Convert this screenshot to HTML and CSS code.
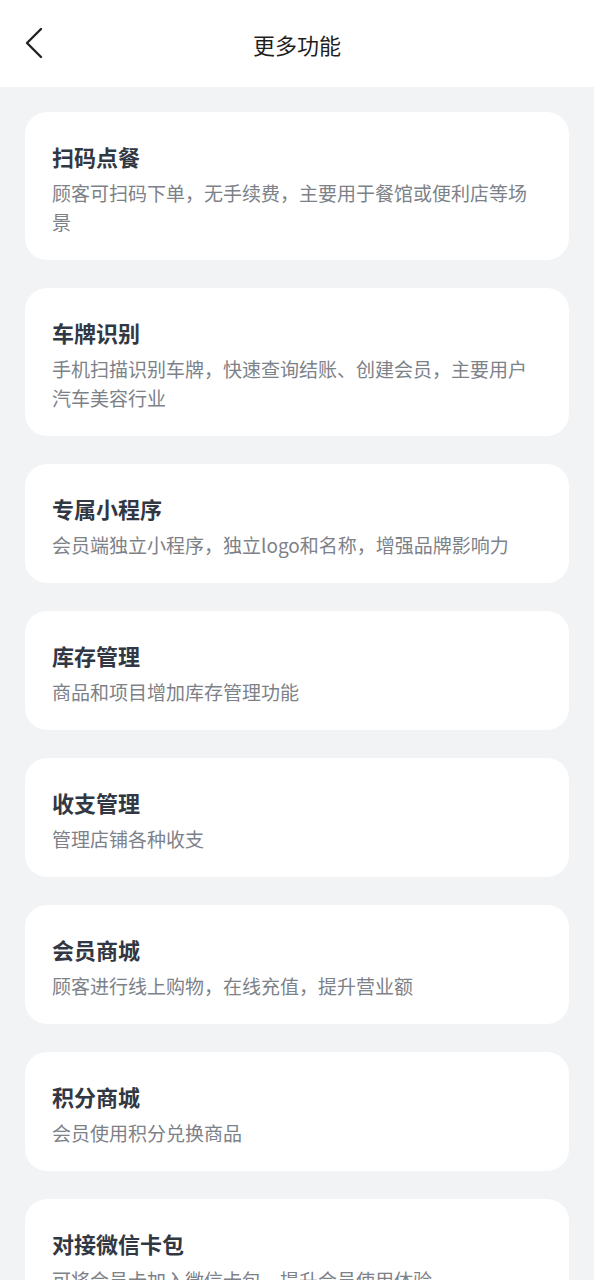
FILE: index.html
```html
<!DOCTYPE html>
<html lang="zh-CN">
<head>
    <meta charset="UTF-8">
    <meta name="viewport" content="width=device-width, initial-scale=1.0">
    <title>更多功能</title>
    <link rel="stylesheet" href="styles.css">
</head>
<body>
    <div class="navbar">
        <a class="back-btn" href="#">
            <svg width="20" height="32" viewBox="0 0 20 32">
                <path d="M17 2 L3 16 L17 30" fill="none" stroke="#222" stroke-width="2.4" stroke-linecap="round" stroke-linejoin="round"/>
            </svg>
        </a>
        <h1 class="nav-title">更多功能</h1>
    </div>

    <div class="feature-list">
        <div class="feature-card">
            <h3>扫码点餐</h3>
            <p>顾客可扫码下单，无手续费，主要用于餐馆或便利店等场景</p>
        </div>
        <div class="feature-card">
            <h3>车牌识别</h3>
            <p>手机扫描识别车牌，快速查询结账、创建会员，主要用户汽车美容行业</p>
        </div>
        <div class="feature-card">
            <h3>专属小程序</h3>
            <p>会员端独立小程序，独立logo和名称，增强品牌影响力</p>
        </div>
        <div class="feature-card">
            <h3>库存管理</h3>
            <p>商品和项目增加库存管理功能</p>
        </div>
        <div class="feature-card">
            <h3>收支管理</h3>
            <p>管理店铺各种收支</p>
        </div>
        <div class="feature-card">
            <h3>会员商城</h3>
            <p>顾客进行线上购物，在线充值，提升营业额</p>
        </div>
        <div class="feature-card">
            <h3>积分商城</h3>
            <p>会员使用积分兑换商品</p>
        </div>
        <div class="feature-card">
            <h3>对接微信卡包</h3>
            <p>可将会员卡加入微信卡包，提升会员使用体验</p>
        </div>
    </div>
</body>
</html>
```

FILE: styles.css
```css
* {
    box-sizing: border-box;
    margin: 0;
    padding: 0;
}

body {
    font-family: "Noto Sans CJK SC", "Noto Sans", sans-serif;
    background: #f2f3f5;
    min-height: 100vh;
}

.navbar {
    position: relative;
    height: 87px;
    background: white;
    display: flex;
    align-items: center;
    justify-content: center;
}

.back-btn {
    position: absolute;
    left: 24px;
    top: 27px;
    display: block;
    line-height: 0;
}

.nav-title {
    font-size: 22px;
    font-weight: 400;
    color: #1f1f1f;
}

.feature-list {
    display: flex;
    flex-direction: column;
    gap: 28px;
    padding: 25px 25px 40px;
}

.feature-card {
    background: white;
    border-radius: 22px;
    padding: 29px 27px 24px;
}

.feature-card h3 {
    font-size: 22px;
    font-weight: 700;
    line-height: 30px;
    color: #323843;
    margin-bottom: 7px;
}

.feature-card p {
    font-size: 19px;
    line-height: 29px;
    color: #7d8188;
}
```
